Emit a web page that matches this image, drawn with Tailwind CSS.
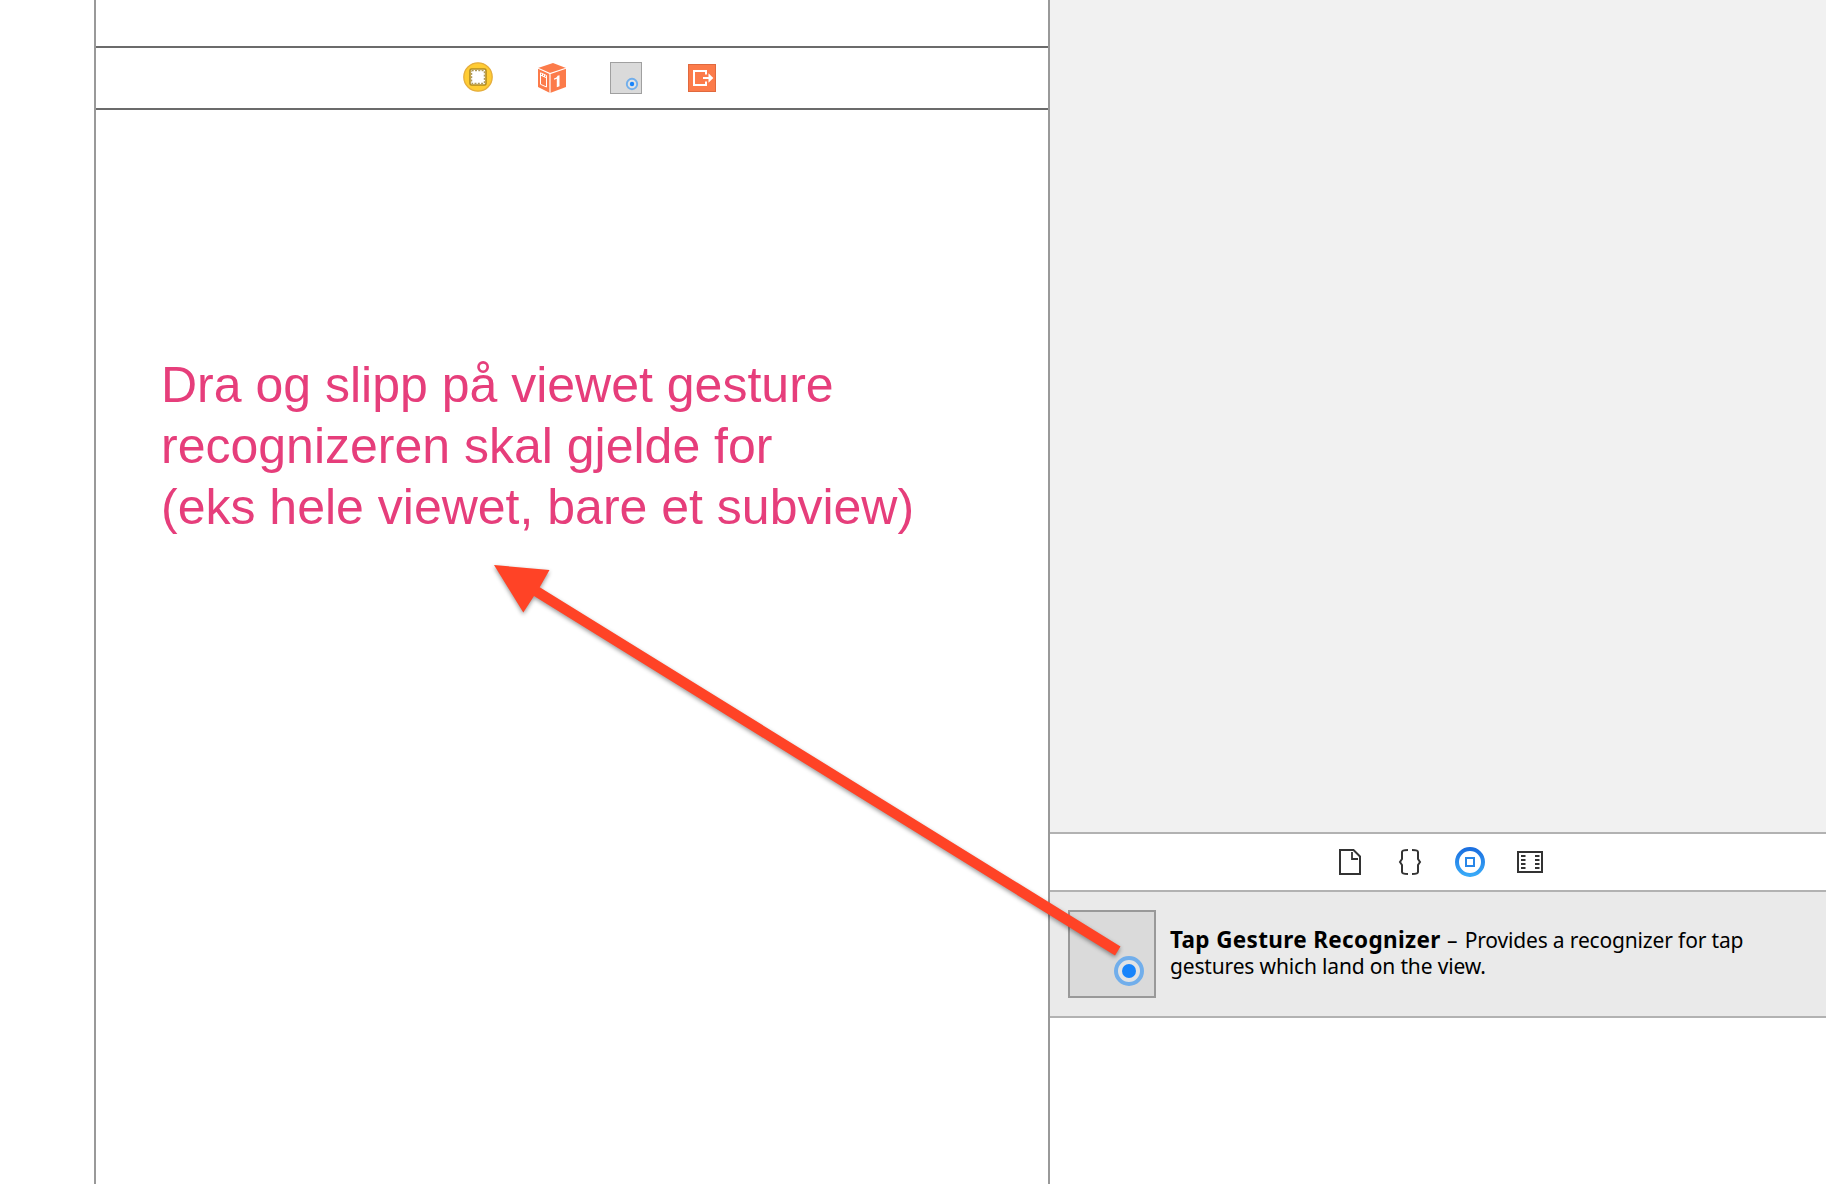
<!DOCTYPE html>
<html lang="no">
<head>
<meta charset="utf-8">
<title>Gesture recognizer</title>
<script src="https://cdn.jsdelivr.net/npm/@tailwindcss/browser@4"></script>
</head>
<body class="relative flex h-[1184px] w-[1826px] overflow-hidden bg-white">
  <!-- canvas gutter -->
  <div class="w-[96px] shrink-0 border-r-2 border-[#999]"></div>

  <!-- scene -->
  <main class="flex w-[954px] shrink-0 flex-col border-r-2 border-[#999]">
    <div class="h-[46px]"></div>
    <div class="flex h-16 items-center border-y-2 border-[#6b6b6b] pl-[367px]">
      <svg class="mr-[45px] mb-0.5 h-[30px] w-[30px]" viewBox="0 0 30 30" fill="none">
        <circle cx="15" cy="15" r="14.2" fill="#ffcc33" stroke="#e5ad3d" stroke-width="1.3"/>
        <rect x="7" y="7" width="16" height="16" rx="1.5" fill="#fff" stroke="#b18b21" stroke-width="1.6"/>
        <rect x="8.7" y="8.7" width="12.6" height="12.6" stroke="#9c8234" stroke-width="1" stroke-dasharray="2 1.3"/>
      </svg>
      <svg class="mr-[44px] h-[30px] w-[28px]" viewBox="0 0 28 30">
        <path d="M15 0 28 5v19L12 30 0 24V5z" fill="#fc7b4a"/>
        <path d="M0 5.2 12 10.5 28 5.2M12 10.5V30" fill="none" stroke="#fff" stroke-width="1.2"/>
        <path d="M2.500 9.800 8.500 12.500v11.500L2.500 21.300z" fill="none" stroke="#fff" stroke-width="1"/>
        <path d="M3 12.300 8.500 14.800M4.500 11V13M6.500 12V14" fill="none" stroke="#fff" stroke-width="1"/>
        <path d="M16 15.500c2-.6 3-1.400 3.500-2.800l2-.5v11l-2.700 1v-8.400l-2.800 1z" fill="#fff"/>
      </svg>
      <svg class="mr-[46px] h-8 w-8" viewBox="0 0 32 32">
        <rect x=".5" y=".5" width="31" height="31" fill="#dadada" stroke="#a0a0a0"/>
        <circle cx="22" cy="22" r="5.200" fill="#dfe3e6" stroke="#71aeeb" stroke-width="1.900"/>
        <circle cx="22" cy="22" r="2.200" fill="#1784fb"/>
      </svg>
      <svg class="h-7 w-7" viewBox="0 0 28 28" fill="none">
        <rect x=".5" y=".5" width="27" height="27" fill="#fc7b4a" stroke="#e0693e"/>
        <path d="M18 10.500V7H6v14h12v-3.500M15 14h6" stroke="#fff" stroke-width="2"/>
        <path d="M20.500 9.300 25.300 14l-4.800 4.700z" fill="#fff"/>
      </svg>
    </div>
    <p class="pt-[245px] pl-[65px] font-['Liberation_Sans'] text-[50px] leading-[61px] whitespace-nowrap text-[#e63e7b]">Dra og slipp på viewet gesture<br>recognizeren skal gjelde for<br>(eks hele viewet, bare et subview)</p>
  </main>

  <!-- utilities -->
  <aside class="flex grow flex-col">
    <div class="h-[832px] shrink-0 bg-[#f1f1f1]"></div>
    <nav class="flex h-[60px] shrink-0 items-center gap-[30px] border-y-2 border-[#b2b2b2] pl-[285px]">
      <svg class="h-[30px] w-[30px]" viewBox="0 0 30 30" fill="none" stroke="#333" stroke-width="2">
        <path d="M5 3h13.500L25 9.500V27H5z"/><path d="M17 5v7h6" stroke-width="1.800"/>
      </svg>
      <svg class="h-[30px] w-[30px]" viewBox="0 0 30 30" fill="none" stroke="#333" stroke-width="2">
        <path d="M13 3C8.500 3 7 3.500 7 5v7l-2 3 2 3v7c0 1.500 1.500 2 6 2M17 3c4.500 0 6 .5 6 2v7l2 3-2 3v7c0 1.500-1.500 2-6 2"/>
      </svg>
      <svg class="h-[30px] w-[30px]" viewBox="0 0 30 30" fill="none">
        <defs><linearGradient id="ring" x1="0" y1="0" x2="0" y2="1"><stop stop-color="#1c70e0"/><stop offset="1" stop-color="#38a9f8"/></linearGradient></defs>
        <circle cx="15" cy="15" r="13" stroke="url(#ring)" stroke-width="4"/>
        <rect x="11" y="11" width="8" height="8" stroke="#2886e8" stroke-width="2"/>
      </svg>
      <svg class="h-[30px] w-[30px]" viewBox="0 0 30 30" fill="none" stroke="#333" stroke-width="2">
        <rect x="3" y="5" width="24" height="20"/>
        <path d="M6 9h4.500M6 13h4.500M6 17h4.500M6 21h4.500M20 9h4.500M20 13h4.500M20 17h4.500M20 21h4.500"/>
      </svg>
    </nav>
    <section class="flex h-[126px] shrink-0 border-b-2 border-[#b2b2b2] bg-[#eaeaea] pt-[18px] pl-[18px]">
      <svg class="h-[88px] w-[88px] shrink-0" viewBox="0 0 88 88">
        <rect x="1" y="1" width="86" height="86" fill="#dadada" stroke="#999" stroke-width="2"/>
        <circle cx="61" cy="61" r="13" fill="#e1e3e5" stroke="#71aeeb" stroke-width="4"/>
        <circle cx="61" cy="61" r="7" fill="#1784fb"/>
      </svg>
      <p class="pt-[17px] pl-[14px] font-['Noto_Sans'] text-[21px] leading-[26px] tracking-[-0.16px] whitespace-nowrap text-black"><b class="mr-px text-[22.5px] tracking-[0.35px]">Tap Gesture Recognizer</b> <span class="mr-0.5">–</span> Provides a recognizer for tap<br>gestures which land on the view.</p>
    </section>
  </aside>

  <!-- drag arrow, laid over both panes -->
  <svg class="absolute inset-0 h-[1184px] w-[1826px] drop-shadow-[0_2px_2px_rgba(0,0,0,0.4)]" viewBox="0 0 1826 1184">
    <path d="M494 565 549.500 570 539.700 587.300 1120.500 946.500 1115 955.500 534 596 523.300 612.500z" fill="#ff4326"/>
  </svg>
</body>
</html>
